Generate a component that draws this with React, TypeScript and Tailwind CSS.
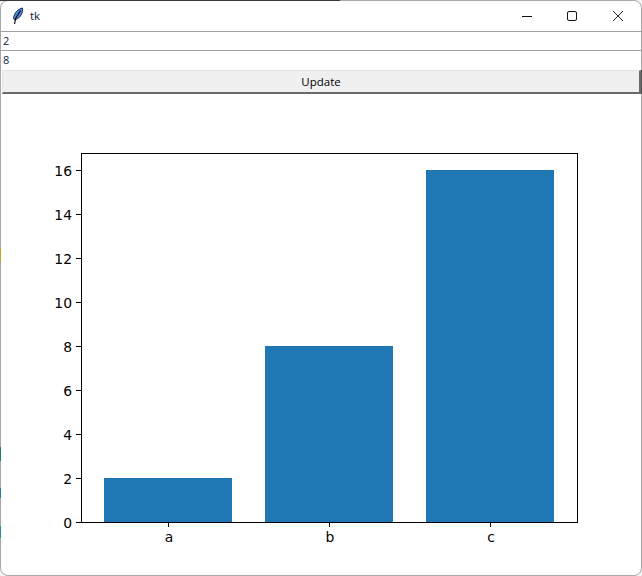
export default function App() {
  const yTicks = [0, 2, 4, 6, 8, 10, 12, 14, 16];
  const yOf = (v: number) => 522 - v * 22;
  const bars = [
    { label: "a", x: 104, v: 2 },
    { label: "b", x: 265, v: 8 },
    { label: "c", x: 426, v: 16 },
  ];
  const chartFont = { fontFamily: '"DejaVu Sans", sans-serif' };
  return (
    <div className="relative w-[642px] h-[576px] overflow-hidden bg-[#f4f4f4] font-['Open_Sans',sans-serif]">
      <div className="w-[642px] h-[576px] flex flex-col overflow-hidden rounded-lg border border-[#a8a8a8] bg-white">
        <div className="h-[30px] shrink-0 flex items-center">
          <svg className="ml-[11px]" width="12" height="18" viewBox="0 0 12 18">
            <path d="M1.5 11.5C2 6.5 5.5 2 10.5 1c.6 4.5-1.6 9.5-6.6 11.5L2.8 13Z" fill="#4a8ae0" stroke="#0b1a33" strokeWidth="0.9" />
            <path d="M8.5 3.5 3.6 11.5 2.6 17" fill="none" stroke="#000" strokeWidth="1.1" />
          </svg>
          <span className="ml-[6px] text-[11.5px] leading-none text-[#10202f]">tk</span>
          <div className="ml-auto flex items-center text-black">
            <svg width="46" height="30" viewBox="0 0 46 30">
              <path d="M7 15.5H17" stroke="#111" strokeWidth="1" />
            </svg>
            <svg width="46" height="30" viewBox="0 0 46 30">
              <rect x="6.5" y="10.5" width="9" height="9" rx="1.5" fill="none" stroke="#111" strokeWidth="1" />
            </svg>
            <svg width="34" height="30" viewBox="0 0 34 30">
              <path d="M6 10 16 20M16 10 6 20" stroke="#222" strokeWidth="1" />
            </svg>
          </div>
        </div>
        <div className="h-[19px] shrink-0 border-t border-[#a2a2a2] pl-[2px] text-[11px] leading-[18px] text-[#0f1f3f]">2</div>
        <div className="h-[20px] shrink-0 border-t border-[#a2a2a2] pl-[2px] text-[11px] leading-[17px] text-[#0f1f3f]">8</div>
        <button className="h-[24px] shrink-0 ml-px flex items-center justify-center border-t border-t-[#e2e2e2] border-b-2 border-b-[#6a6a6a] border-r-2 border-r-[#6a6a6a] border-l border-l-[#e2e2e2] bg-[#f0f0f0] pt-px text-[11.5px] text-black">
          Update
        </button>
        <svg width="642" height="481" viewBox="0 94 642 481" className="-ml-px shrink-0 block" style={chartFont}>
          {bars.map((b) => (
            <rect key={b.label} x={b.x} y={yOf(b.v)} width="128" height={b.v * 22} fill="#1f77b4" />
          ))}
          <rect x="81.5" y="153.5" width="496" height="369" fill="none" stroke="#000" strokeWidth="1" />
          {yTicks.map((t) => (
            <g key={t}>
              <line x1="76" x2="81" y1={yOf(t) + 0.5} y2={yOf(t) + 0.5} stroke="#000" strokeWidth="1" />
              <text x="72" y={yOf(t) + 5.5} textAnchor="end" fontSize="13.9" fill="#000">{t}</text>
            </g>
          ))}
          {bars.map((b) => (
            <g key={b.label}>
              <line x1={b.x + 64.5} x2={b.x + 64.5} y1="523" y2="527" stroke="#000" strokeWidth="1" />
              <text x={b.x + 65} y="542" textAnchor="middle" fontSize="13.9" fill="#000">{b.label}</text>
            </g>
          ))}
        </svg>
      </div>
      <div className="absolute left-0 top-0 h-px w-[340px] bg-[#3a3a3a]" />
      <div className="absolute left-0 top-[248px] h-[14px] w-px bg-[#c9a227]" />
      <div className="absolute left-0 top-[447px] h-[14px] w-px bg-[#1f7f6a]" />
      <div className="absolute left-0 top-[488px] h-[10px] w-px bg-[#2a78a8]" />
      <div className="absolute left-0 top-[526px] h-[12px] w-px bg-[#2a8aa0]" />
      <div className="absolute right-0 top-[70px] h-[24px] w-px bg-[#555]" />
    </div>
  );
}
